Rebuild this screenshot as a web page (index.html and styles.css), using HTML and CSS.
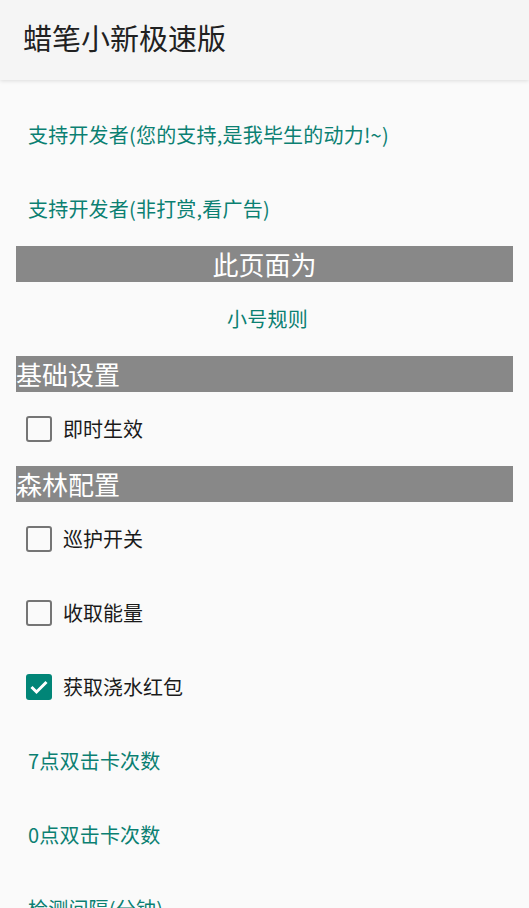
FILE: index.html
```html
<!DOCTYPE html>
<html lang="zh-CN">
<head>
<meta charset="utf-8">
<title>蜡笔小新极速版</title>
<link rel="stylesheet" href="styles.css">
</head>
<body>
<header class="appbar">
  <h1 class="appbar-title">蜡笔小新极速版</h1>
</header>
<main class="content">
  <div class="row link-row"><span class="link">支持开发者(您的支持,是我毕生的动力!~)</span></div>
  <div class="row link-row"><span class="link">支持开发者(非打赏,看广告)</span></div>
  <div class="section center">此页面为</div>
  <div class="row link-row centered"><span class="link">小号规则</span></div>
  <div class="section">基础设置</div>
  <label class="row check-row"><span class="box"></span><span class="label">即时生效</span></label>
  <div class="section">森林配置</div>
  <label class="row check-row"><span class="box"></span><span class="label">巡护开关</span></label>
  <label class="row check-row"><span class="box"></span><span class="label">收取能量</span></label>
  <label class="row check-row"><span class="box checked"><svg viewBox="0 0 26 26" width="26" height="26"><path d="M5.5 13 L10.5 18 L20.5 8" fill="none" stroke="#ffffff" stroke-width="3" stroke-linecap="butt" stroke-linejoin="miter"/></svg></span><span class="label">获取浇水红包</span></label>
  <div class="row link-row"><span class="link">7点双击卡次数</span></div>
  <div class="row link-row"><span class="link">0点双击卡次数</span></div>
  <div class="row link-row"><span class="link">检测间隔(分钟)</span></div>
</main>
</body>
</html>
```

FILE: styles.css
```css
html, body {
  margin: 0;
  padding: 0;
}
body {
  background: #fafafa;
  font-family: "Noto Sans CJK SC", "Noto Sans", sans-serif;
  width: 529px;
  height: 908px;
  overflow: hidden;
}
.appbar {
  height: 80px;
  background: #f5f5f5;
  box-shadow: 0 1px 4px rgba(0,0,0,0.12);
  display: flex;
  align-items: center;
  padding-left: 23px;
  position: relative;
  z-index: 1;
}
.appbar-title {
  margin: 0;
  font-size: 29px;
  font-weight: 400;
  color: #212121;
  line-height: 1;
  position: relative;
  top: -3px;
}
.content {
  padding: 18px 16px 0 16px;
  display: flex;
  flex-direction: column;
}
.row {
  height: 74px;
  display: flex;
  align-items: center;
}
.link-row {
  padding-left: 12px;
}
.link-row.centered {
  justify-content: center;
  padding-left: 6px;
}
.link {
  color: #0b8072;
  font-size: 20px;
  font-weight: 400;
  line-height: 1;
  letter-spacing: 0.2px;
}
.section {
  height: 36px;
  background: #888888;
  color: #ffffff;
  font-size: 26px;
  line-height: 36px;
  white-space: nowrap;
}
.section.center {
  text-align: center;
}
.check-row {
  padding-left: 10px;
  gap: 11px;
}
.box {
  width: 26px;
  height: 26px;
  box-sizing: border-box;
  border: 2.5px solid #757575;
  border-radius: 3px;
  display: flex;
}
.box.checked {
  border: none;
  background: #018577;
}
.label {
  font-size: 20px;
  color: #1a1a1a;
  line-height: 1;
}
```
